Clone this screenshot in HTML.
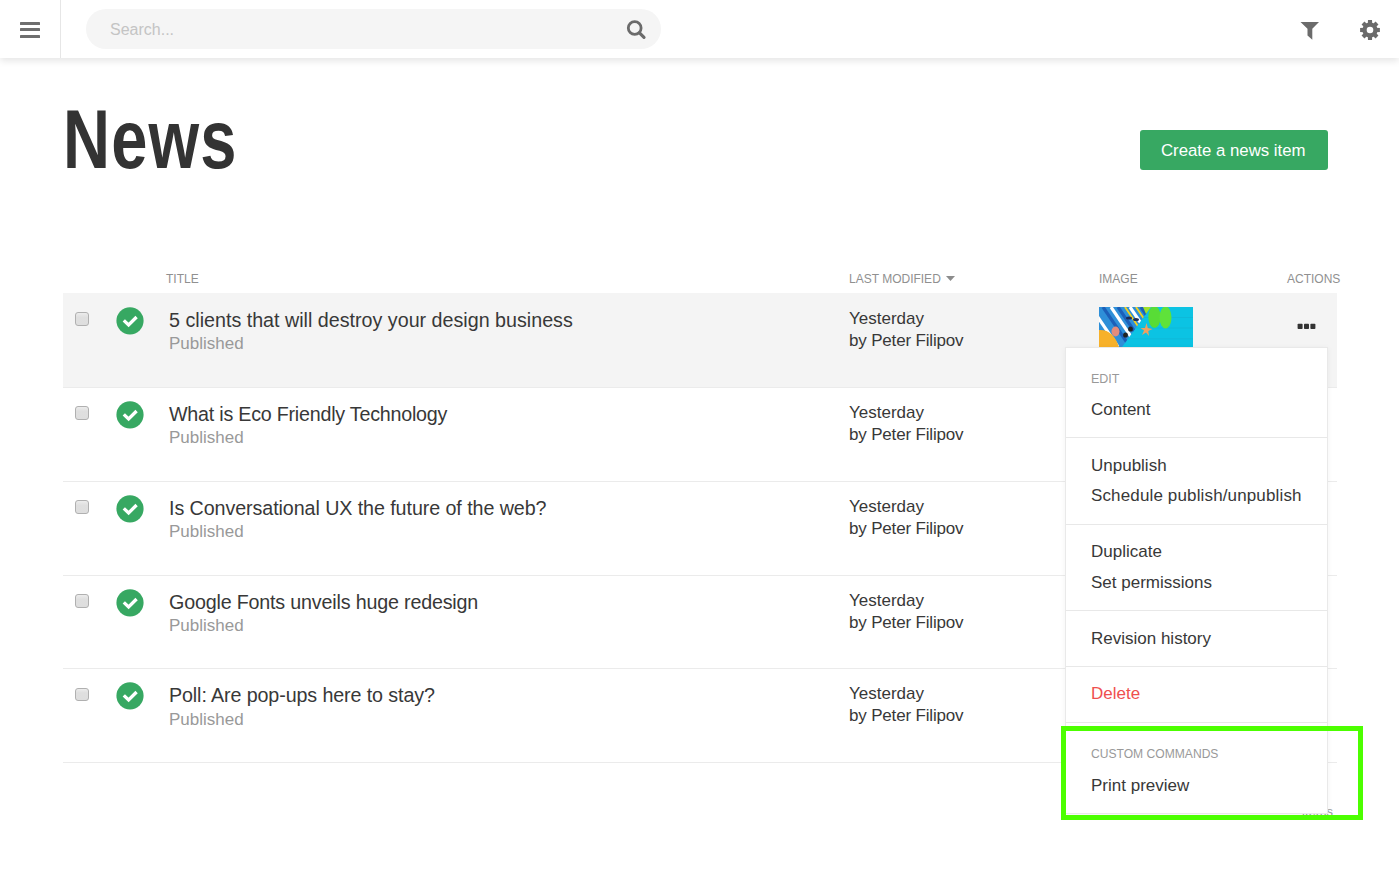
<!DOCTYPE html>
<html><head><meta charset="utf-8">
<style>
*{box-sizing:border-box;margin:0;padding:0}
html,body{width:1399px;height:877px;overflow:hidden;background:#fff;font-family:"Liberation Sans",sans-serif;color:#333}
.a{position:absolute;white-space:nowrap}
#hdr{position:absolute;left:0;top:0;width:1399px;height:58px;background:#fff;box-shadow:0 3px 7px rgba(0,0,0,.1);z-index:5}
#hleft{position:absolute;left:0;top:0;width:61px;height:58px;border-right:1px solid #e6e6e6}
.bar{position:absolute;left:20px;width:20px;height:3px;background:#6e6e6e;border-radius:0.6px}
#search{position:absolute;left:86px;top:9px;width:575px;height:40px;border-radius:20px;background:#f5f5f5}
.th{font-size:12px;color:#909090;text-transform:uppercase}
.row{position:absolute;left:63px;width:1274px;border-bottom:1px solid #e8e8e8}
.ttl{font-size:19.7px;color:#383838}
.pub{font-size:17px;color:#999}
.mod{font-size:17px;color:#383838}
.cb{position:absolute;left:75px;width:13.5px;height:13.5px;border:1px solid #b0b0b0;border-radius:3px;background:linear-gradient(#ececec,#dfdfdf 35%,#dedede)}
.ck{position:absolute;left:116px;width:28px;height:28px}
#dd{position:absolute;left:1065px;top:347px;width:263px;height:467px;background:#fff;border:1px solid #e9e9e9;box-shadow:0 1px 6px rgba(0,0,0,.05);z-index:3}
.sep{position:absolute;left:0;width:261px;height:1px;background:#e8e8e8}
.mi{font-size:17px;color:#383838}
.mh{font-size:12.5px;color:#999}
</style></head>
<body>
<div id="hdr">
  <div id="hleft">
    <div class="bar" style="top:22px"></div>
    <div class="bar" style="top:28px"></div>
    <div class="bar" style="top:35px"></div>
  </div>
  <div id="search"></div>
  <span class="a" style="left:110px;top:19.5px;font-size:16px;line-height:20px;color:#c4c4c4">Search...</span>
  <svg class="a" style="left:620px;top:14px" width="32" height="30" viewBox="620 14 32 30">
    <circle cx="634.7" cy="28" r="6.4" fill="none" stroke="#6b6b6b" stroke-width="2.8"/>
    <line x1="639.5" y1="32.8" x2="644" y2="37.3" stroke="#6b6b6b" stroke-width="3.2" stroke-linecap="round"/>
  </svg>
  <svg class="a" style="left:1296px;top:16px" width="30" height="28" viewBox="1296 16 30 28">
    <polygon points="1300.5,22 1319,22 1312.3,28.8 1312.3,39.7 1307.5,35.5 1307.5,28.8" fill="#6b6b6b"/>
  </svg>
  <svg class="a" style="left:1356px;top:16px" width="28" height="28" viewBox="-14 -14 28 28">
    <g fill="#6b6b6b">
      <circle r="7.6"/>
      <path d="M-2 -9.9 H2 L2.2 -6 H-2.2Z"/>
      <path d="M-2 -9.9 H2 L2.2 -6 H-2.2Z" transform="rotate(45)"/>
      <path d="M-2 -9.9 H2 L2.2 -6 H-2.2Z" transform="rotate(90)"/>
      <path d="M-2 -9.9 H2 L2.2 -6 H-2.2Z" transform="rotate(135)"/>
      <path d="M-2 -9.9 H2 L2.2 -6 H-2.2Z" transform="rotate(180)"/>
      <path d="M-2 -9.9 H2 L2.2 -6 H-2.2Z" transform="rotate(225)"/>
      <path d="M-2 -9.9 H2 L2.2 -6 H-2.2Z" transform="rotate(270)"/>
      <path d="M-2 -9.9 H2 L2.2 -6 H-2.2Z" transform="rotate(315)"/>
    </g>
    <circle r="3.3" fill="#fff"/>
  </svg>
</div>

<div class="a" style="left:63px;top:94.6px;font-size:83px;font-weight:bold;color:#333;line-height:90px;letter-spacing:1.5px;transform:scaleX(0.784);transform-origin:0 0">News</div>

<div class="a" style="left:1140px;top:130px;width:188px;height:40px;background:#37a862;border-radius:3px"></div>
<span class="a" style="left:1161px;top:141px;font-size:16.8px;line-height:20px;color:#fff">Create a news item</span>

<span class="a th" style="left:166px;top:272px;line-height:14px">Title</span>
<span class="a th" style="left:849px;top:272px;line-height:14px">Last modified</span>
<svg class="a" style="left:946px;top:275.5px" width="10" height="6"><polygon points="0,0 9,0 4.5,5" fill="#8c8c8c"/></svg>
<span class="a th" style="left:1099px;top:272px;line-height:14px">Image</span>
<span class="a th" style="left:1287px;top:272px;line-height:14px">Actions</span>

<div id="rows">
<div class="a" style="left:63px;top:293px;width:1274px;height:94px;background:#f4f4f4"></div>
<div class="a" style="left:63px;top:387px;width:1274px;height:1px;background:#ebebeb"></div>
<div class="a" style="left:63px;top:481px;width:1274px;height:1px;background:#ebebeb"></div>
<div class="a" style="left:63px;top:575px;width:1274px;height:1px;background:#ebebeb"></div>
<div class="a" style="left:63px;top:668px;width:1274px;height:1px;background:#ebebeb"></div>
<div class="a" style="left:63px;top:762px;width:1274px;height:1px;background:#ebebeb"></div>
<div class="cb" style="top:312px"></div>
<svg class="ck" style="top:306.5px" width="28" height="28" viewBox="0 0 28 28"><circle cx="14" cy="13.8" r="13.6" fill="#37a862"/><polyline points="7.8,13.4 12.6,18 20.6,10" fill="none" stroke="#fff" stroke-width="3.3"/></svg>
<span class="a ttl" style="left:169px;top:307.7px;line-height:24px">5 clients that will destroy your design business</span>
<span class="a pub" style="left:169px;top:334px;line-height:20px">Published</span>
<span class="a mod" style="left:849px;top:308.8px;line-height:20px">Yesterday</span>
<span class="a mod" style="left:849px;top:330.8px;line-height:20px;letter-spacing:-0.17px">by Peter Filipov</span>
<div class="cb" style="top:406px"></div>
<svg class="ck" style="top:400.5px" width="28" height="28" viewBox="0 0 28 28"><circle cx="14" cy="13.8" r="13.6" fill="#37a862"/><polyline points="7.8,13.4 12.6,18 20.6,10" fill="none" stroke="#fff" stroke-width="3.3"/></svg>
<span class="a ttl" style="left:169px;top:401.7px;line-height:24px;letter-spacing:-0.23px">What is Eco Friendly Technology</span>
<span class="a pub" style="left:169px;top:428px;line-height:20px">Published</span>
<span class="a mod" style="left:849px;top:402.8px;line-height:20px">Yesterday</span>
<span class="a mod" style="left:849px;top:424.8px;line-height:20px;letter-spacing:-0.17px">by Peter Filipov</span>
<div class="cb" style="top:500px"></div>
<svg class="ck" style="top:494.5px" width="28" height="28" viewBox="0 0 28 28"><circle cx="14" cy="13.8" r="13.6" fill="#37a862"/><polyline points="7.8,13.4 12.6,18 20.6,10" fill="none" stroke="#fff" stroke-width="3.3"/></svg>
<span class="a ttl" style="left:169px;top:495.7px;line-height:24px;letter-spacing:-0.08px">Is Conversational UX the future of the web?</span>
<span class="a pub" style="left:169px;top:522px;line-height:20px">Published</span>
<span class="a mod" style="left:849px;top:496.8px;line-height:20px">Yesterday</span>
<span class="a mod" style="left:849px;top:518.8px;line-height:20px;letter-spacing:-0.17px">by Peter Filipov</span>
<div class="cb" style="top:594px"></div>
<svg class="ck" style="top:588.5px" width="28" height="28" viewBox="0 0 28 28"><circle cx="14" cy="13.8" r="13.6" fill="#37a862"/><polyline points="7.8,13.4 12.6,18 20.6,10" fill="none" stroke="#fff" stroke-width="3.3"/></svg>
<span class="a ttl" style="left:169px;top:589.7px;line-height:24px;letter-spacing:-0.18px">Google Fonts unveils huge redesign</span>
<span class="a pub" style="left:169px;top:616px;line-height:20px">Published</span>
<span class="a mod" style="left:849px;top:590.8px;line-height:20px">Yesterday</span>
<span class="a mod" style="left:849px;top:612.8px;line-height:20px;letter-spacing:-0.17px">by Peter Filipov</span>
<div class="cb" style="top:687.5px"></div>
<svg class="ck" style="top:682.0px" width="28" height="28" viewBox="0 0 28 28"><circle cx="14" cy="13.8" r="13.6" fill="#37a862"/><polyline points="7.8,13.4 12.6,18 20.6,10" fill="none" stroke="#fff" stroke-width="3.3"/></svg>
<span class="a ttl" style="left:169px;top:683.2px;line-height:24px;letter-spacing:-0.11px">Poll: Are pop-ups here to stay?</span>
<span class="a pub" style="left:169px;top:709.5px;line-height:20px">Published</span>
<span class="a mod" style="left:849px;top:684.3px;line-height:20px">Yesterday</span>
<span class="a mod" style="left:849px;top:706.3px;line-height:20px;letter-spacing:-0.17px">by Peter Filipov</span>
</div>

<div class="a" style="left:1099px;top:307px;width:94px;height:40px;overflow:hidden">
  <svg width="94" height="40" viewBox="0 0 94 40">
    <rect width="94" height="40" fill="#0cc3e3"/>
    <g stroke="#10b2d2" stroke-width="0.6"><line x1="20" y1="10.5" x2="94" y2="10.5"/><line x1="20" y1="21" x2="94" y2="21"/><line x1="20" y1="31.8" x2="94" y2="31.8"/></g>
    <defs><clipPath id="tw"><polygon points="0,0 52,0 23,40 0,40"/></clipPath></defs>
    <g clip-path="url(#tw)">
      <rect width="60" height="40" fill="#2e8fd8"/>
      <g stroke-width="3.2">
        <line x1="-8" y1="0" x2="19" y2="40" stroke="#fff"/>
        <line x1="4" y1="0" x2="31" y2="40" stroke="#1c5fb8"/>
        <line x1="12" y1="0" x2="39" y2="40" stroke="#fff"/>
        <line x1="19" y1="0" x2="46" y2="40" stroke="#1c5fb8"/>
        <line x1="26" y1="0" x2="53" y2="40" stroke="#f5d21c" stroke-width="1.8"/>
        <line x1="31" y1="0" x2="58" y2="40" stroke="#fff"/>
        <line x1="37" y1="0" x2="64" y2="40" stroke="#f5d21c" stroke-width="1.8"/>
        <line x1="42" y1="0" x2="69" y2="40" stroke="#1c5fb8"/>
        <line x1="-14" y1="8" x2="13" y2="48" stroke="#f5d21c" stroke-width="1.8"/>
      </g>
    </g>
    <polygon points="44,0 52,0 47,7" fill="#9ee02c"/>
    <ellipse cx="55.5" cy="10" rx="6.2" ry="11" fill="#58dc36"/>
    <ellipse cx="66.5" cy="10.5" rx="6" ry="11" fill="#5fe23a"/>
    <path d="M0 23 Q14 22 20 40 L0 40Z" fill="#f7b12a"/>
    <ellipse cx="16.5" cy="24.5" rx="4" ry="5" fill="#e48c7c"/>
    <g fill="#222"><ellipse cx="26.5" cy="28" rx="2.4" ry="2.6"/><ellipse cx="31.5" cy="22" rx="2.4" ry="2.6"/></g>
    <g fill="#1d2d58"><ellipse cx="30" cy="11" rx="3" ry="1.6"/><ellipse cx="37" cy="12.5" rx="3" ry="1.6"/></g>
    <polygon points="47.5,16 48.8,21 53.5,22 49.3,24 50,29 47,25.5 43,28 45,23.5 41.5,21 46,21" fill="#f0a060"/>
  </svg>
</div>
<svg class="a" style="left:1297px;top:322.5px" width="20" height="7"><rect x="0.6" y="0.8" width="5" height="5.2" rx="0.8" fill="#333"/><rect x="7" y="0.8" width="5" height="5.2" rx="0.8" fill="#333"/><rect x="13.4" y="0.8" width="5" height="5.2" rx="0.8" fill="#333"/></svg>
<span class="a" style="left:1302px;top:804px;font-size:13px;line-height:16px;color:#999">items</span>
<div id="dd">
  <span class="a mh" style="left:25px;top:23px;line-height:16px">EDIT</span>
  <span class="a mi" style="left:25px;top:52px;line-height:20px">Content</span>
  <div class="sep" style="top:89px"></div>
  <span class="a mi" style="left:25px;top:108px;line-height:20px">Unpublish</span>
  <span class="a mi" style="left:25px;top:138px;line-height:20px;letter-spacing:0.14px">Schedule publish/unpublish</span>
  <div class="sep" style="top:176px"></div>
  <span class="a mi" style="left:25px;top:194px;line-height:20px">Duplicate</span>
  <span class="a mi" style="left:25px;top:225px;line-height:20px">Set permissions</span>
  <div class="sep" style="top:262px"></div>
  <span class="a mi" style="left:25px;top:281px;line-height:20px">Revision history</span>
  <div class="sep" style="top:318px"></div>
  <span class="a mi" style="left:25px;top:336px;line-height:20px;color:#ef4f4f">Delete</span>
  <div class="sep" style="top:374px"></div>
  <span class="a mh" style="left:25px;top:398px;line-height:16px;font-size:12.1px">CUSTOM COMMANDS</span>
  <span class="a mi" style="left:25px;top:428px;line-height:20px">Print preview</span>
</div>
<div class="a" style="left:1061px;top:726px;width:302px;height:94px;border:5px solid #4cff00;z-index:4"></div>


</body></html>
